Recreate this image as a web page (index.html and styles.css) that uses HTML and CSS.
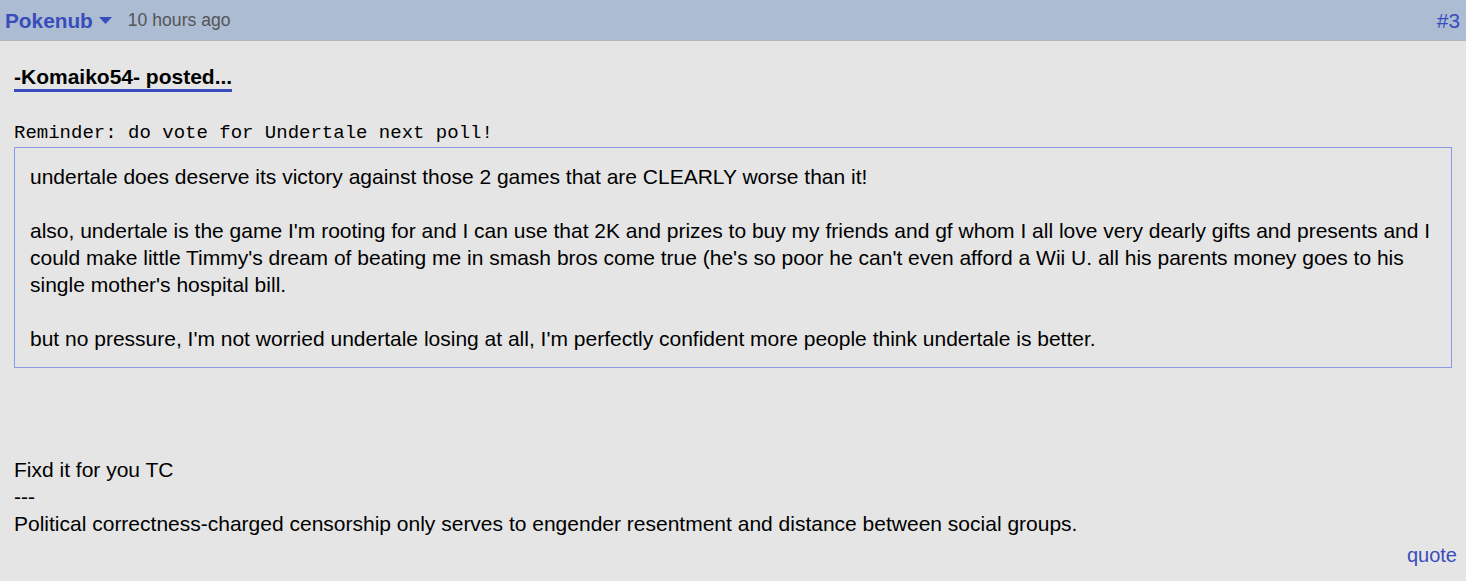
FILE: index.html
```html
<!DOCTYPE html>
<html lang="en">
<head>
    <meta charset="UTF-8">
    <title>Message #3</title>
    <link rel="stylesheet" href="styles.css">
</head>
<body>
    <div class="msg-head">
        <div class="msg-author">
            <a class="user" href="#">Pokenub</a>
            <svg class="caret" width="13" height="7" viewBox="0 0 13 7"><path d="M0 0H13L6.5 7Z" fill="#3a4cbb"/></svg>
            <span class="time">10 hours ago</span>
        </div>
        <a class="msg-num" href="#">#3</a>
    </div>

    <div class="msg-body">
        <div class="posted"><span>-Komaiko54- posted...</span></div>
        <div class="mono">Reminder: do vote for Undertale next poll!</div>
        <div class="quoted">
            undertale does deserve its victory against those 2 games that are CLEARLY worse than it!<br><br>
            also, undertale is the game I'm rooting for and I can use that 2K and prizes to buy my friends and gf whom I all love very dearly gifts and presents and I could make little Timmy's dream of beating me in smash bros come true (he's so poor he can't even afford a Wii U. all his parents money goes to his single mother's hospital bill.<br><br>
            but no pressure, I'm not worried undertale losing at all, I'm perfectly confident more people think undertale is better.
        </div>
        <div class="reply">
            Fixd it for you TC<br>
            ---<br>
            Political correctness-charged censorship only serves to engender resentment and distance between social groups.
        </div>
        <div class="actions"><a href="#">quote</a></div>
    </div>
</body>
</html>
```

FILE: styles.css
```css
body {
    margin: 0;
    background: #e5e5e5;
    font-family: "Liberation Sans", Arial, sans-serif;
    font-size: 21px;
    line-height: 27px;
    color: #000;
}
a {
    color: #3a4cbb;
    text-decoration: none;
}
.msg-head {
    display: flex;
    justify-content: space-between;
    align-items: center;
    height: 40px;
    padding: 0 6px 0 5px;
    font-size: 20.8px;
    background: #abbcd3;
    border-bottom: 1px solid #b6b6b6;
}
.msg-author {
    display: flex;
    align-items: center;
}
.user {
    font-weight: bold;
}
.caret {
    margin: 1px 0 0 6px;
}
.time {
    margin-left: 16px;
    font-size: 17.6px;
    color: #555;
}
.msg-body {
    padding: 22px 14px 0;
}
.posted span {
    display: inline-block;
    line-height: 24px;
    font-weight: bold;
    border-bottom: 3px solid #3b4cc0;
}
.mono {
    margin-top: 28px;
    font-family: "Liberation Mono", "Courier New", monospace;
    font-size: 19px;
}
.quoted {
    padding: 15px;
    border: 1px solid #8a9ae2;
}
.reply {
    margin-top: 88px;
}
.actions {
    margin-top: 5px;
    margin-right: -5px;
    text-align: right;
    font-size: 20px;
}
```
